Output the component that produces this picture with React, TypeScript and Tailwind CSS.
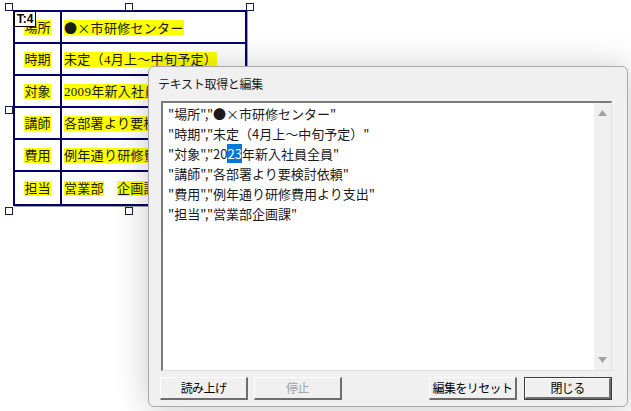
import React from 'react';

const rows: { label: string; value: string[] }[] = [
  { label: '場所', value: ['●×市研修センター'] },
  { label: '時期', value: ['未定（4月上～中旬予定）'] },
  { label: '対象', value: ['2009年新入社員全員'] },
  { label: '講師', value: ['各部署より要検討依頼'] },
  { label: '費用', value: ['例年通り研修費用より支出'] },
  { label: '担当', value: ['営業部', '企画課'] },
];

const lines = [
  '"場所","●×市研修センター"',
  '"時期","未定（4月上～中旬予定）"',
  null,
  '"講師","各部署より要検討依頼"',
  '"費用","例年通り研修費用より支出"',
  '"担当","営業部企画課"',
];

// selection handles around the text box
const handles = [
  [5, 3], [125, 3], [246, 3],
  [5, 106], [246, 106],
  [5, 207], [125, 207], [246, 207],
];

function Button({ label, disabled, primary }: { label: string; disabled?: boolean; primary?: boolean }) {
  return (
    <div className={`w-[88px] h-[23px] ${primary ? 'border border-[#3c3c3c]' : ''}`}>
      <div className="h-full w-full flex items-center justify-center bg-[#f0f0f0] border-t border-l border-t-white border-l-white border-r-2 border-b-2 border-r-[#6d6d6d] border-b-[#6d6d6d]">
        <span className={`text-[12px] leading-none whitespace-nowrap tracking-[-0.6px] ${disabled ? 'text-[#a0a0a0]' : 'text-black'}`}>{label}</span>
      </div>
    </div>
  );
}

export default function App() {
  return (
    <div className="relative w-[631px] h-[411px] bg-white overflow-hidden" style={{ fontFamily: '"Noto Sans CJK JP", sans-serif' }}>
      {/* table text box */}
      <div className="pt-[10px] pl-[13px]">
        <div
          className="relative w-[234px] h-[196px] border-2 border-[#000066] grid grid-cols-[47px_1fr] grid-rows-6 shadow-[1px_1px_0_#a0a0a0]"
          style={{ fontFamily: '"Liberation Serif", "Noto Sans CJK JP", serif' }}
        >
          {rows.map((r, i) => (
            <React.Fragment key={r.label}>
              <div className={`flex items-center justify-center border-r-2 border-[#000066] ${i < 5 ? 'border-b-2' : ''}`}>
                <span className="bg-[#ffff00] text-[13px] leading-[15px] text-[#1a1a1a]">{r.label}</span>
              </div>
              <div className={`flex items-center pl-[2px] gap-[13px] overflow-hidden whitespace-nowrap border-[#000066] ${i < 5 ? 'border-b-2' : ''}`}>
                {r.value.map((v) => (
                  <span
                    key={v}
                    className="bg-[#ffff00] text-[13px] leading-[15px] tracking-[0.3px] text-[#1a1a1a]"
                    style={i === 0 ? { fontFamily: '"Noto Sans CJK JP", sans-serif' } : undefined}
                  >
                    {v}
                  </span>
                ))}
              </div>
            </React.Fragment>
          ))}
          <div className="absolute left-[-1px] top-[-1px] w-[22px] h-[16px] bg-white border border-black flex items-center justify-center">
            <span className="text-[12px] font-bold leading-none text-black" style={{ fontFamily: '"Liberation Sans", sans-serif' }}>T:4</span>
          </div>
        </div>
      </div>

      {handles.map(([x, y]) => (
        <div key={`${x}-${y}`} className="absolute w-[8px] h-[8px] bg-white border border-[#1a1a4a]" style={{ left: x, top: y }} />
      ))}

      {/* dialog */}
      <div className="absolute left-[148px] top-[66px] w-[480px] h-[341px] bg-[#f0f0f0] border border-[#a8a8a8] rounded-[6px] shadow-[0_2px_34px_rgba(0,0,0,0.22)] flex flex-col">
        <div className="h-[34px] flex items-center pl-[9px]">
          <span className="text-[12px] text-[#1a1a1a] tracking-[-0.3px]">テキスト取得と編集</span>
        </div>
        <div className="ml-[12px] w-[451px] h-[270px] bg-white border-t-2 border-l-2 border-t-[#7a7a7a] border-l-[#7a7a7a] border-r border-b border-r-[#e0e0e0] border-b-[#e0e0e0] flex">
          <div className="flex-1 pl-[5px] pt-[1px] text-[13px] leading-[20px] text-[#1a1a1a] whitespace-nowrap">
            {lines.map((l, i) =>
              l === null ? (
                <div key={i}>
                  "対象","20<span className="bg-[#0078d7] text-white">23</span>年新入社員全員"
                </div>
              ) : (
                <div key={i}>{l}</div>
              )
            )}
          </div>
          <div className="w-[17px] bg-[#f0f0f0] flex flex-col items-center justify-between py-[7px]">
            <svg width="9" height="6" viewBox="0 0 9 6"><path d="M0 6 L4.5 0 L9 6 Z" fill="#a3a3a3" /></svg>
            <svg width="9" height="6" viewBox="0 0 9 6"><path d="M0 0 L4.5 6 L9 0 Z" fill="#a3a3a3" /></svg>
          </div>
        </div>
        <div className="mt-[6px] ml-[11px] w-[452px] flex">
          <div className="flex gap-[6px]">
            <Button label="読み上げ" />
            <Button label="停止" disabled />
          </div>
          <div className="ml-auto flex gap-[7px]">
            <Button label="編集をリセット" />
            <Button label="閉じる" primary />
          </div>
        </div>
      </div>
    </div>
  );
}
